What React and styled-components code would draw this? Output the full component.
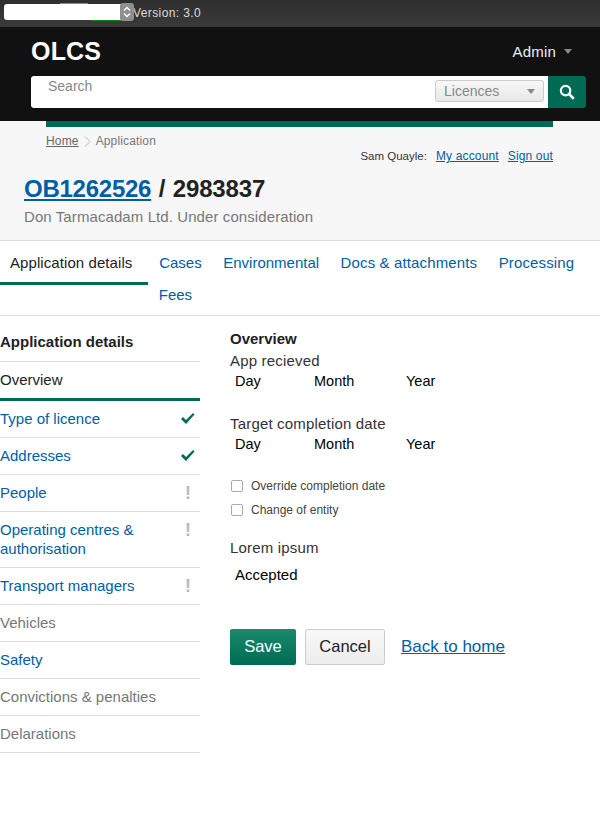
import React from 'react';
import styled, { createGlobalStyle } from 'styled-components';

const GlobalStyle = createGlobalStyle`
  html, body {
    margin: 0;
    padding: 0;
    background: #fff;
    font-family: "Liberation Sans", Arial, sans-serif;
    color: #222;
  }
`;

const Page = styled.div`
  width: 600px;
  height: 813px;
  overflow: hidden;
`;

const VersionBar = styled.div`
  height: 27px;
  display: flex;
  align-items: flex-start;
  padding: 3px 0 0 3px;
  box-sizing: border-box;
  background: linear-gradient(#2e2e2e, #3a3a3a);
  font-size: 12px;
  color: #ddd;
`;

const FakeSelect = styled.div`
  position: relative;
  width: 131px;
  height: 18px;
  display: flex;
  justify-content: flex-end;
`;

const SelectFill = styled.div`
  position: absolute;
  left: 1px;
  top: 1px;
  width: 118px;
  height: 16px;
  background: #fff;
  border-radius: 3px 0 0 3px;
`;

const SelectSpin = styled.div`
  width: 14px;
  height: 18px;
  background: #8f8f8f;
  border-radius: 3px;
  position: relative;
  display: flex;
  align-items: center;
  justify-content: center;
`;

const GreyTrace = styled.div`
  position: absolute;
  left: 57px;
  top: 0;
  width: 28px;
  height: 1px;
  background: #888;
`;

const GreenTrace = styled.div`
  position: absolute;
  left: 88px;
  top: 17px;
  width: 30px;
  height: 1px;
  background: #0a8a0a;
`;

const VersionText = styled.span`
  line-height: 21px;
  letter-spacing: 0.4px;
  margin-left: -1px;
`;

const Header = styled.header`
  background: #111;
  height: 94px;
  padding: 7px 14px 0 31px;
  box-sizing: border-box;
`;

const HeaderTop = styled.div`
  display: flex;
  justify-content: space-between;
  height: 42px;
`;

const Logo = styled.div`
  font-size: 25px;
  font-weight: bold;
  letter-spacing: 0.2px;
  color: #fff;
  line-height: 34px;
`;

const AdminMenu = styled.div`
  display: flex;
  align-items: center;
  gap: 8px;
  height: 34px;
  padding-right: 14px;
  color: #eee;
  font-size: 15px;
  letter-spacing: 0.2px;
`;

const Caret = styled.span`
  width: 0;
  height: 0;
  border-left: 4.5px solid transparent;
  border-right: 4.5px solid transparent;
  border-top: 5px solid ${(p) => p.$color};
`;

const SearchRow = styled.div`
  display: flex;
  height: 32px;
`;

const SearchBox = styled.div`
  flex: 1;
  background: #fff;
  border-radius: 3px 0 0 3px;
  display: flex;
  justify-content: space-between;
  align-items: flex-start;
  padding: 0 4px 0 17px;
`;

const SearchHint = styled.span`
  color: #888;
  font-size: 14px;
  line-height: 21px;
`;

const ScopeSelect = styled.div`
  width: 109px;
  height: 22px;
  margin-top: 4px;
  box-sizing: border-box;
  border: 1px solid #ccc;
  border-radius: 3px;
  background: linear-gradient(#f8f8f8, #e8e8e8);
  display: flex;
  align-items: center;
  justify-content: space-between;
  padding: 0 8px;
  color: #888;
  font-size: 14px;
`;

const SearchButton = styled.div`
  width: 38px;
  background: #006b54;
  border-radius: 0 3px 3px 0;
  display: flex;
  align-items: center;
  justify-content: center;
`;

const Masthead = styled.div`
  background: #f7f7f7;
  height: 119px;
  border-bottom: 1px solid #ddd;
`;

const AccentWrap = styled.div`
  padding: 0 47px 0 46px;
`;

const AccentBar = styled.div`
  height: 6px;
  background: #006b54;
`;

const Crumbs = styled.div`
  display: flex;
  align-items: center;
  gap: 5px;
  height: 16px;
  margin: 6px 0 0 46px;
  font-size: 12px;
  letter-spacing: 0.15px;
  color: #777;
`;

const CrumbLink = styled.a`
  color: #666;
  text-decoration: underline;
`;

const Chevron = styled.svg`
  width: 7px;
  height: 11px;
  fill: none;
  stroke: #bbb;
  stroke-width: 1;
`;

const UserRow = styled.div`
  display: flex;
  justify-content: flex-end;
  align-items: center;
  gap: 9px;
  height: 14px;
  padding-right: 47px;
  font-size: 11.5px;
  color: #333;
`;

const UserLink = styled.a`
  color: #005ea5;
  font-size: 12px;
  letter-spacing: 0.15px;
  text-decoration: underline;
`;

const TitleLine = styled.h1`
  margin: 11px 0 0 24px;
  font-size: 24px;
  letter-spacing: -0.15px;
  word-spacing: 1px;
  line-height: 30px;
  font-weight: bold;
  color: #222;
`;

const TitleLink = styled.a`
  color: #005ea5;
  letter-spacing: -0.25px;
  text-decoration: underline;
`;

const SubTitle = styled.div`
  margin: 3px 0 0 24px;
  font-size: 15px;
  letter-spacing: 0.09px;
  line-height: 19px;
  color: #777;
`;

const Tabs = styled.nav`
  display: flex;
  flex-wrap: wrap;
  height: 74px;
  border-bottom: 1px solid #ddd;
  align-content: flex-start;
`;

const Tab = styled.a`
  height: 44px;
  box-sizing: border-box;
  padding: ${(p) => (p.$active ? '13px 16px 0 10px' : '13px 10.75px 0')};
  font-size: 15px;
  letter-spacing: ${(p) => p.$spacing || 0}px;
  line-height: 18px;
  color: ${(p) => (p.$active ? '#222' : '#005ea5')};
  border-bottom: ${(p) => (p.$active ? '3px solid #006b54' : 'none')};
`;

const RowBreak = styled.div`
  flex-basis: 100%;
  height: 0;
`;

const FeesTab = styled(Tab)`
  height: 30px;
  padding-top: 1px;
  margin-left: 148px;
`;

const Body = styled.div`
  display: flex;
  gap: 30px;
`;

const Sidebar = styled.aside`
  width: 200px;
  flex-shrink: 0;
`;

const SideTitle = styled.div`
  font-size: 15px;
  font-weight: bold;
  line-height: 19px;
  padding: 16px 0 10px;
  color: #222;
  border-bottom: 1px solid #ddd;
`;

const SideRow = styled.div`
  display: flex;
  justify-content: space-between;
  align-items: flex-start;
  padding: 8px 5px 9px 0;
  font-size: 15px;
  line-height: 19px;
  color: ${(p) => p.$color};
  border-bottom: ${(p) => (p.$current ? '3px solid #006b54' : '1px solid #ddd')};
`;

const SideLabel = styled.span`
  width: 160px;
`;

const Mark = styled.span`
  font-size: 19px;
  font-weight: bold;
  line-height: 19px;
  color: #bbb;
  margin-right: 4px;
`;

const Main = styled.main`
  flex: 1;
  padding-top: 14px;
  font-size: 15px;
  letter-spacing: 0.18px;
  color: #333;
`;

const SectionTitle = styled.div`
  font-size: 15px;
  letter-spacing: 0;
  font-weight: bold;
  line-height: 17px;
  color: #222;
`;

const FieldLabel = styled.div`
  line-height: 19px;
  margin-top: ${(p) => p.$top}px;
`;

const DateRow = styled.div`
  display: grid;
  grid-template-columns: 79px 92px auto;
  justify-content: start;
  padding-left: 5px;
  margin-top: 2px;
  font-size: 14.5px;
  letter-spacing: 0;
  line-height: 19px;
  color: #000;
`;

const CheckRow = styled.label`
  display: flex;
  align-items: center;
  gap: 8px;
  height: 24px;
  padding-left: 1px;
  font-size: 12px;
  letter-spacing: 0;
  color: #444;
`;

const CheckBox = styled.span`
  width: 10px;
  height: 10px;
  border: 1px solid #aaa;
  border-radius: 2px;
  background: #fff;
`;

const Checks = styled.div`
  margin-top: 20px;
`;

const PlainValue = styled.div`
  padding-left: 5px;
  margin-top: 8px;
  font-size: 15px;
  letter-spacing: 0;
  line-height: 19px;
  color: #000;
`;

const Actions = styled.div`
  display: flex;
  align-items: center;
  margin-top: 45px;
  letter-spacing: 0;
`;

const SaveButton = styled.div`
  width: 66px;
  height: 36px;
  box-sizing: border-box;
  padding-bottom: 2px;
  display: flex;
  align-items: center;
  justify-content: center;
  background: linear-gradient(#198a6a, #006b54);
  border-radius: 2px;
  color: #fff;
  font-size: 16.500px;
`;

const CancelButton = styled.div`
  width: 80px;
  height: 36px;
  box-sizing: border-box;
  padding-bottom: 2px;
  margin-left: 9px;
  display: flex;
  align-items: center;
  justify-content: center;
  background: linear-gradient(#f8f8f8, #ececec);
  border: 1px solid #ccc;
  border-radius: 2px;
  color: #222;
  font-size: 16.500px;
`;

const BackLink = styled.a`
  margin-left: 16px;
  color: #005ea5;
  font-size: 17px;
  text-decoration: underline;
`;

const Tick = () => (
  <svg width="15" height="13" viewBox="0 0 15 13" style={{ marginTop: 3 }}>
    <path d="M1 7l2-2 3 3 7-7 1.500 1.500L6 12z" fill="#006b54" />
  </svg>
);

const sideItems = [
  { label: 'Type of licence', color: '#005ea5', mark: 'tick' },
  { label: 'Addresses', color: '#005ea5', mark: 'tick' },
  { label: 'People', color: '#005ea5', mark: 'warn' },
  { label: 'Operating centres & authorisation', color: '#005ea5', mark: 'warn' },
  { label: 'Transport managers', color: '#005ea5', mark: 'warn' },
  { label: 'Vehicles', color: '#777' },
  { label: 'Safety', color: '#005ea5' },
  { label: 'Convictions & penalties', color: '#777' },
  { label: 'Delarations', color: '#777' },
];

const App = () => (
  <Page>
    <GlobalStyle />
    <VersionBar>
      <FakeSelect>
        <SelectFill />
        <GreyTrace />
        <GreenTrace />
        <SelectSpin>
          <svg width="8" height="12" viewBox="0 0 8 12" fill="none" stroke="#fff" strokeWidth="1.4">
            <path d="M1 4.500L4 1.500L7 4.500M1 7.500L4 10.500L7 7.500" />
          </svg>
        </SelectSpin>
      </FakeSelect>
      <VersionText>Version: 3.0</VersionText>
    </VersionBar>
    <Header>
      <HeaderTop>
        <Logo>OLCS</Logo>
        <AdminMenu>
          Admin
          <Caret $color="#888" />
        </AdminMenu>
      </HeaderTop>
      <SearchRow>
        <SearchBox>
          <SearchHint>Search</SearchHint>
          <ScopeSelect>
            Licences
            <Caret $color="#888" />
          </ScopeSelect>
        </SearchBox>
        <SearchButton>
          <svg width="16" height="16" viewBox="0 0 17 17" fill="none" stroke="#fff">
            <circle cx="7" cy="7" r="5" strokeWidth="2.400" />
            <path d="M10.500 10.500l5.200 5.200" strokeWidth="2.800" />
          </svg>
        </SearchButton>
      </SearchRow>
    </Header>
    <Masthead>
      <AccentWrap>
        <AccentBar />
      </AccentWrap>
      <Crumbs>
        <CrumbLink>Home</CrumbLink>
        <Chevron viewBox="0 0 7 11">
          <path d="M1 .5l5 5-5 5" />
        </Chevron>
        Application
      </Crumbs>
      <UserRow>
        <span>Sam Quayle:</span>
        <UserLink>My account</UserLink>
        <UserLink>Sign out</UserLink>
      </UserRow>
      <TitleLine>
        <TitleLink>OB1262526</TitleLink> / 2983837
      </TitleLine>
      <SubTitle>Don Tarmacadam Ltd. Under consideration</SubTitle>
    </Masthead>
    <Tabs>
      <Tab $active $spacing={0.08}>Application details</Tab>
      <Tab>Cases</Tab>
      <Tab>Environmental</Tab>
      <Tab $spacing={0.13}>Docs &amp; attachments</Tab>
      <Tab $spacing={0.13}>Processing</Tab>
      <RowBreak />
      <FeesTab>Fees</FeesTab>
    </Tabs>
    <Body>
      <Sidebar>
        <SideTitle>Application details</SideTitle>
        <SideRow $current $color="#222">
          <SideLabel>Overview</SideLabel>
        </SideRow>
        {sideItems.map((item) => (
          <SideRow key={item.label} $color={item.color}>
            <SideLabel>{item.label}</SideLabel>
            {item.mark === 'tick' && <Tick />}
            {item.mark === 'warn' && <Mark>!</Mark>}
          </SideRow>
        ))}
      </Sidebar>
      <Main>
        <SectionTitle>Overview</SectionTitle>
        <FieldLabel $top={4}>App recieved</FieldLabel>
        <DateRow>
          <span>Day</span>
          <span>Month</span>
          <span>Year</span>
        </DateRow>
        <FieldLabel $top={23}>Target completion date</FieldLabel>
        <DateRow>
          <span>Day</span>
          <span>Month</span>
          <span>Year</span>
        </DateRow>
        <Checks>
          <CheckRow>
            <CheckBox />
            Override completion date
          </CheckRow>
          <CheckRow>
            <CheckBox />
            Change of entity
          </CheckRow>
        </Checks>
        <FieldLabel $top={16}>Lorem ipsum</FieldLabel>
        <PlainValue>Accepted</PlainValue>
        <Actions>
          <SaveButton>Save</SaveButton>
          <CancelButton>Cancel</CancelButton>
          <BackLink>Back to home</BackLink>
        </Actions>
      </Main>
    </Body>
  </Page>
);

export default App;
